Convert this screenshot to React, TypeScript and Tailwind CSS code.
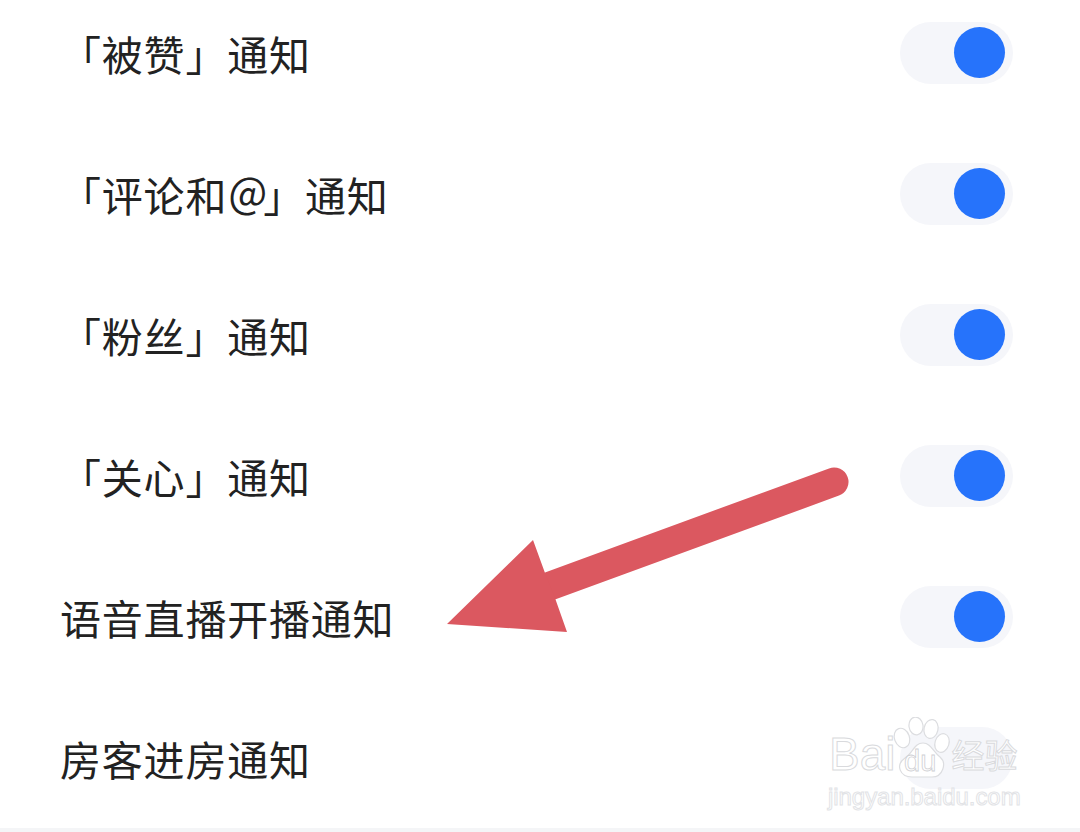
import React from "react";

const rows = [
  { id: "like", label: <>「被赞」通知</>, on: true },
  { id: "comment", label: <>「评论和<span className="tracking-[-5px]">＠</span>」通知</>, on: true },
  { id: "fans", label: <>「粉丝」通知</>, on: true },
  { id: "care", label: <>「关心」通知</>, on: true },
  { id: "live", label: <>语音直播开播通知</>, on: true },
  { id: "guest", label: <>房客进房通知</>, on: false },
];

function Toggle({ on }: { on: boolean }) {
  return (
    <div className="flex h-[62px] w-[113px] items-center justify-end rounded-full bg-[#f5f6fa] pr-[8px]">
      <div
        className={
          on
            ? "h-[51px] w-[51px] rounded-full bg-[#2673fb]"
            : "h-[51px] w-[51px] rounded-full bg-[#f5f6fa]"
        }
      />
    </div>
  );
}

function Arrow() {
  return (
    <svg
      className="absolute left-[440px] top-[460px]"
      width="420"
      height="180"
      viewBox="440 460 420 180"
    >
      <path
        d="M834 482L550 586"
        stroke="#db5860"
        strokeWidth="29"
        strokeLinecap="round"
        fill="none"
      />
      <path d="M447 624L533 540L545 573L555 598L567 632Z" fill="#db5860" />
    </svg>
  );
}

function Watermark() {
  return (
    <div className="absolute left-[828px] top-[716px] flex w-[200px] flex-col font-['Liberation_Sans',sans-serif] text-white [-webkit-text-stroke:1px_#d9dadd]">
      <div className="flex h-[64px] items-end">
        <span className="ml-[1px] text-[46px] leading-[52px]">Bai</span>
        <svg className="-ml-[3px] mb-[1px] shrink-0" width="62" height="62" viewBox="0 0 62 62" fill="#fff" stroke="#dcdde0" strokeWidth="1.2">
          <ellipse cx="10" cy="21" rx="7.5" ry="10" transform="rotate(-20 10 21)" />
          <ellipse cx="24" cy="9" rx="7" ry="9" transform="rotate(-8 24 9)" />
          <ellipse cx="39" cy="12" rx="7" ry="9.5" transform="rotate(12 39 12)" />
          <ellipse cx="50" cy="26" rx="7" ry="9.5" transform="rotate(18 50 26)" />
          <path d="M31 26C39 26 41 35 48 40C55 46 51 60 40 60H20C8 60 3 48 13 41C21 36 22 26 31 26Z" />
          <text x="12" y="54" fontSize="29" strokeWidth="0.8" fill="#fff" stroke="#cfd0d4">du</text>
        </svg>
        <span className="-ml-[3px] mb-[2px] font-['Noto_Sans_CJK_SC',sans-serif] text-[33px] leading-[48px]">经验</span>
      </div>
      <span className="mt-[2px] text-[24px] leading-[30px] tracking-[-0.05px] [-webkit-text-stroke:1px_#e2e3e6]">
        jingyan.baidu.com
      </span>
    </div>
  );
}

export default function App() {
  return (
    <div className="relative h-[832px] w-[1080px] overflow-hidden bg-white font-['Noto_Sans_CJK_SC',sans-serif]">
      <div className="-mt-[18px] flex flex-col pl-[60px] pr-[67px]">
        {rows.map((row) => (
          <div key={row.id} className="flex h-[141px] items-center justify-between">
            <span className="text-[41px] leading-[50px] tracking-[0.8px] text-[#222222]">
              {row.label}
            </span>
            <Toggle on={row.on} />
          </div>
        ))}
      </div>
      <div className="absolute inset-x-0 bottom-0 h-[4px] bg-[#f4f5f7]" />
      <Arrow />
      <Watermark />
    </div>
  );
}
